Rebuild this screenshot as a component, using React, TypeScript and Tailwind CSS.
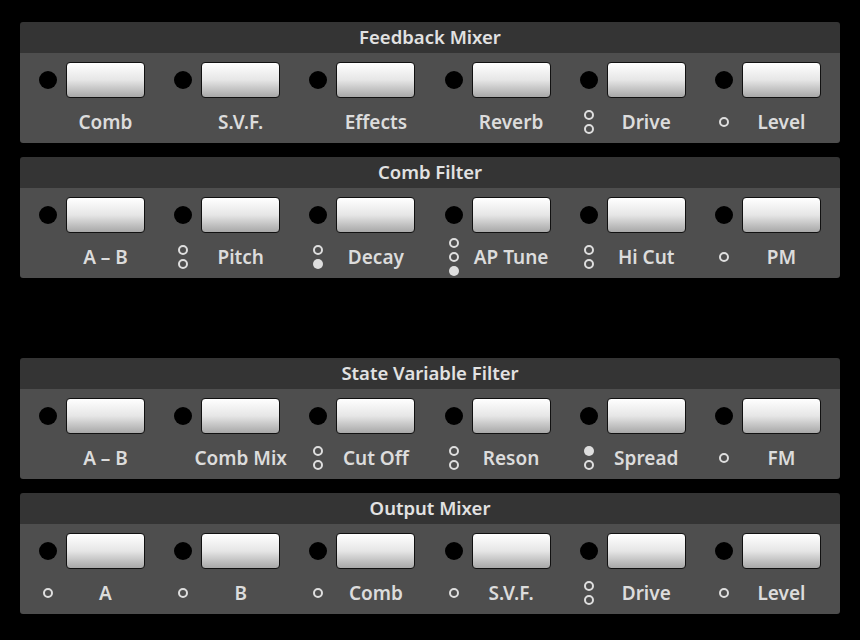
import React from 'react';

type Slot = { label: string; ind?: ('o' | 'f')[] };

const panels: { title: string; slots: Slot[] }[] = [
  {
    title: 'Feedback Mixer',
    slots: [
      { label: 'Comb' },
      { label: 'S.V.F.' },
      { label: 'Effects' },
      { label: 'Reverb' },
      { label: 'Drive', ind: ['o', 'o'] },
      { label: 'Level', ind: ['o'] },
    ],
  },
  {
    title: 'Comb Filter',
    slots: [
      { label: 'A – B' },
      { label: 'Pitch', ind: ['o', 'o'] },
      { label: 'Decay', ind: ['o', 'f'] },
      { label: 'AP Tune', ind: ['o', 'o', 'f'] },
      { label: 'Hi Cut', ind: ['o', 'o'] },
      { label: 'PM', ind: ['o'] },
    ],
  },
  {
    title: 'State Variable Filter',
    slots: [
      { label: 'A – B' },
      { label: 'Comb Mix' },
      { label: 'Cut Off', ind: ['o', 'o'] },
      { label: 'Reson', ind: ['o', 'o'] },
      { label: 'Spread', ind: ['f', 'o'] },
      { label: 'FM', ind: ['o'] },
    ],
  },
  {
    title: 'Output Mixer',
    slots: [
      { label: 'A', ind: ['o'] },
      { label: 'B', ind: ['o'] },
      { label: 'Comb', ind: ['o'] },
      { label: 'S.V.F.', ind: ['o'] },
      { label: 'Drive', ind: ['o', 'o'] },
      { label: 'Level', ind: ['o'] },
    ],
  },
];

function Column({ slot }: { slot: Slot }) {
  return (
    <div className="flex flex-col pl-[14px]">
      <div className="flex items-center gap-[9px] mt-[9px] h-[36px]">
        <div className="w-[18px] h-[18px] rounded-full bg-black" />
        <div className="w-[79px] h-[36px] rounded-[4px] border-[1.5px] border-[#111] bg-gradient-to-b from-white via-[#e6e6e6] to-[#a8a8a8]" />
      </div>
      <div className="flex items-center gap-[9px] mt-[4px] h-[40px]">
        <div className="w-[18px] flex flex-col items-center gap-[4px]">
          {slot.ind?.map((k, i) => (
            <div
              key={i}
              className={
                k === 'f'
                  ? 'w-[10px] h-[10px] rounded-full bg-[#dedede]'
                  : 'w-[10px] h-[10px] rounded-full border-2 border-[#dedede]'
              }
            />
          ))}
        </div>
        <div className="w-[79px] flex justify-center whitespace-nowrap text-[19px] font-semibold text-[#dcdcdc]">
          {slot.label}
        </div>
      </div>
    </div>
  );
}

function Panel({ title, slots }: { title: string; slots: Slot[] }) {
  return (
    <div className="rounded-[3px] overflow-hidden">
      <div className="h-[31px] pb-[2px] bg-[#343434] flex items-center justify-center text-[18.5px] font-semibold text-[#e2e2e2]">
        {title}
      </div>
      <div className="h-[90px] bg-[#4e4e4e] px-[5px] grid grid-cols-[repeat(6,135.2px)]">
        {slots.map((s, i) => (
          <Column key={i} slot={s} />
        ))}
      </div>
    </div>
  );
}

export default function App() {
  return (
    <div
      className="w-[860px] h-[640px] bg-black px-[20px] pt-[22px] flex flex-col"
      style={{ fontFamily: '"Noto Sans", "Open Sans", sans-serif' }}
    >
      <Panel {...panels[0]} />
      <div className="mt-[14px]">
        <Panel {...panels[1]} />
      </div>
      <div className="mt-[80px]">
        <Panel {...panels[2]} />
      </div>
      <div className="mt-[14px]">
        <Panel {...panels[3]} />
      </div>
    </div>
  );
}
